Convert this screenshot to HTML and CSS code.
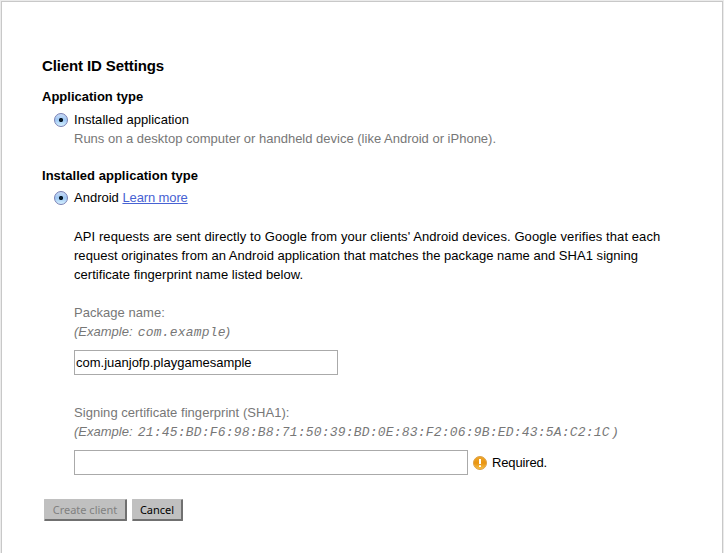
FILE: index.html
```html
<!DOCTYPE html>
<html lang="en">
<head>
<meta charset="utf-8">
<title>Client ID Settings</title>
<link rel="stylesheet" href="styles.css">
</head>
<body>
<main class="dialog">
  <h1 class="title">Client ID Settings</h1>
  <h2 class="heading">Application type</h2>
  <div class="option">
    <input class="radio" type="radio" name="application" id="installed" checked>
    <div>
      <label class="name" for="installed">Installed application</label>
      <p class="hint">Runs on a desktop computer or handheld device (like Android or iPhone).</p>
    </div>
  </div>
  <h2 class="heading second">Installed application type</h2>
  <div class="option android">
    <input class="radio" type="radio" name="platform" id="android" checked>
    <div><label for="android">Android</label> <a class="link" href="#">Learn more</a></div>
  </div>
  <div class="details">
    <p class="description"><span class="opening">API requests are sent directly to Google from your clients' Android devices. Google verifies that each</span><br>request originates from an Android application that matches the package name and SHA1 signing<br>certificate fingerprint name listed below.</p>
    <label class="field-label" for="package">Package name:</label>
    <p class="example">(Example: <code class="code">com.example</code>)</p>
    <input class="field package" id="package" type="text" value="com.juanjofp.playgamesample">
    <label class="field-label" for="fingerprint">Signing certificate fingerprint (SHA1):</label>
    <p class="example">(Example: <code class="code">21:45:BD:F6:98:B8:71:50:39:BD:0E:83:F2:06:9B:ED:43:5A:C2:1C</code> )</p>
    <div class="field-row">
      <input class="field fingerprint" id="fingerprint" type="text">
      <svg class="alert" viewBox="0 0 14 14" aria-hidden="true">
        <defs><linearGradient id="amber" x2="0" y2="1"><stop stop-color="#efa72c"/><stop offset=".5" stop-color="#e99410"/><stop offset="1" stop-color="#f9c34c"/></linearGradient></defs>
        <circle cx="7" cy="7" r="6.5" fill="url(#amber)" stroke="#dba047"/>
        <path d="M7 3v5M7 9.2v1.8" stroke="#fff" stroke-width="2"/>
      </svg>
      <span class="required">Required.</span>
    </div>
  </div>
  <div class="actions">
    <button class="button create" disabled>Create client</button>
    <button class="button cancel">Cancel</button>
  </div>
</main>
</body>
</html>
```
FILE: styles.css
```css
* { box-sizing: border-box; }
body {
  margin: 0;
  height: 553px;
  overflow: hidden;
  padding: 1px 1px 0;
  background: #ebebeb;
  color: #000;
  font: 13px/19px "Liberation Sans", Arial, sans-serif;
}
.dialog {
  height: 552px;
  padding: 54px 40px 0;
  border: 1px solid #c8c8c8;
  border-bottom: 0;
  background: #fff;
}
h1, h2, p { margin: 0; }
.title { font-size: 15px; line-height: 20px; letter-spacing: -.12px; }
.heading { margin-top: 11px; font-size: 13px; line-height: 19px; }
.option { display: flex; margin-top: 4px; padding-left: 12px; }
.android { margin-top: 3px; }
.radio {
  flex: none;
  width: 14px;
  height: 14px;
  margin: 3px 6px 0 0;
  appearance: none;
  border: 1px solid #787fb4;
  border-radius: 50%;
  background:
    radial-gradient(circle, #071827 0 1.7px, transparent 2.5px),
    linear-gradient(#c8daf5, #9fc8f3 50%, #d5f1ff);
}
.name { display: block; letter-spacing: .04px; }
.hint, .field-label, .example { color: #777; }
.second { margin-top: 18px; letter-spacing: .03px; }
.link { color: #4762d3; letter-spacing: -.12px; }
.details { padding: 20px 0 0 32px; }
.description { white-space: nowrap; margin-bottom: 19px; letter-spacing: .035px; }
.opening { letter-spacing: .085px; }
.field-label { display: block; letter-spacing: .04px; }
.example { font-style: italic; white-space: nowrap; }
.code {
  margin-left: 1.5px;
  font: italic 13px/16px "Liberation Mono", "Courier New", monospace;
  letter-spacing: .2px;
}
.field {
  display: block;
  height: 25px;
  padding: 0 1px;
  border: 1px solid #aaa;
  background: #fff;
  color: #000;
  font: 13px "Liberation Sans", Arial, sans-serif;
}
.package { width: 264px; margin: 9px 0 28px; }
.fingerprint { width: 394px; }
.field-row { display: flex; align-items: center; margin-top: 9px; }
.alert { width: 14px; height: 14px; margin: 0 5px; }
.required { letter-spacing: -.15px; }
.actions { display: flex; gap: 5px; margin: 24px 0 0 2px; }
.button {
  height: 22px;
  padding: 0;
  border: solid #c0c0c0;
  border-width: 1px 2px 2px 1px;
  border-right-color: #707070;
  border-bottom-color: #707070;
  border-radius: 1px;
  background: #c0c0c0;
  color: #000;
  font: 11px "Noto Sans", sans-serif;
}
.create { width: 83px; color: #808080; }
.cancel { width: 51px; }
```
